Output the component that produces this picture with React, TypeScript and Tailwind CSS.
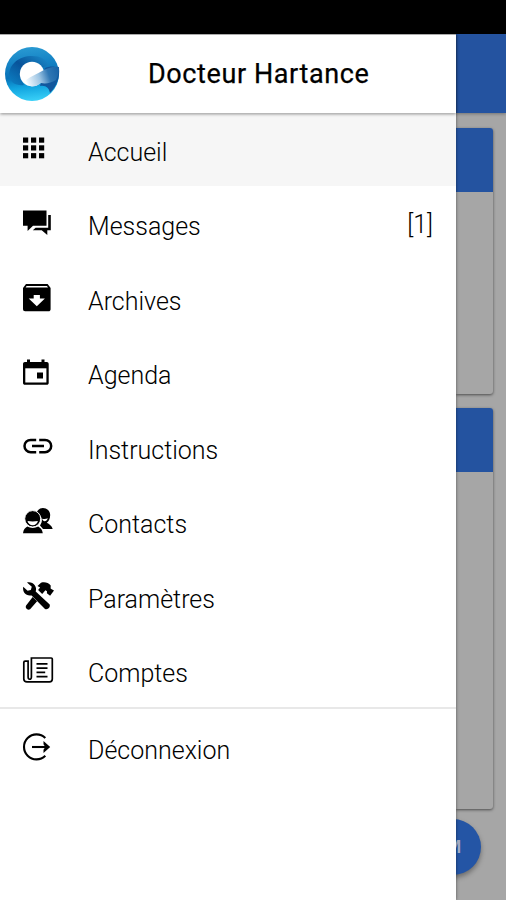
import type { ReactNode } from "react";
import { clsx } from "clsx";

type MenuItem = { label: string; icon: ReactNode; badge?: string; active?: boolean };

const AppsIcon = () => (
  <>
    {[2.5, 10.3, 18.1].map((y) =>
      [0, 8, 16].map((x) => <rect key={`${x}-${y}`} x={x} y={y} width="5.2" height="5.2" />)
    )}
  </>
);

const ChatIcon = () => (
  <>
    <path d="M0 .5h23.5v15.3H10L4.6 21v-5.2H0z" />
    <path d="M25.2 5h2.6v15.3h-3.5v4.6l-5.6-4.6H9.8l2.8-2.6h12.6z" />
  </>
);

const ArchiveIcon = () => (
  <>
    <path d="M3 0h21.6l3 4v21.2c0 1.2-.9 2.1-2.1 2.1H2.1A2.1 2.1 0 0 1 0 25.2V4z" />
    <path d="M3.6 1.9h20.4l1 1.5H2.6zM13.8 22.2l-8.1-7.7h5V11h6.2v3.5h5z" fill="#fff" />
  </>
);

const AgendaIcon = () => (
  <>
    <path d="M4 .5h3V3h11.5V.5h3V3h2.3c1.1 0 1.9.8 1.9 1.9v19c0 1.1-.8 1.9-1.9 1.9H1.9C.8 25.8 0 25 0 23.9v-19C0 3.8.8 3 1.9 3H4z" />
    <path d="M2.3 9.3h21.1v14.2H2.3z" fill="#fff" />
    <path d="M14 13.5h6v6h-6z" />
  </>
);

const LinkIcon = () => (
  <path
    d="M13.2 6.9H7.7a6.2 6.2 0 0 0 0 12.4h5.5M16.2 6.9H22a6.2 6.2 0 0 1 0 12.4h-5.8M9 13.1h12"
    fill="none"
    stroke="currentColor"
    strokeWidth="2.5"
  />
);

const ContactsIcon = () => (
  <>
    <path d="M13.5 5c.8-3 3.2-5 6.4-5C24 0 27.2 3 27.2 7c0 3.7-1.5 6.2-3.4 7.7 2.5 1.3 5 3 5.9 6.3H20l-3-3.6c3-4 3-9-3.5-12.4z" />
    <path d="M19 10.7c2.2.5 4.2.3 5.8-.4-.6 1.900-1.800 2.900-3.200 2.900-1.100 0-2-.9-2.600-2.500z" fill="#fff" />
    <ellipse cx="9.7" cy="10.8" rx="8" ry="8.2" stroke="#fff" strokeWidth="1" />
    <path d="M4.5 13.1c3.4.6 7 .6 10.4 0-.6 2.7-2.600 4.200-5.200 4.200s-4.600-1.500-5.200-4.200z" fill="#fff" />
    <path d="M4.3 18.600c1.600.9 3.400 1.400 5.400 1.400s3.900-.5 5.500-1.400c2.500 1.500 4 3.200 4.600 6.600H0c.6-3.400 1.800-5.100 4.300-6.600z" />
  </>
);

const ToolsIcon = () => (
  <>
    <path d="M4 .4 8.8 4.8 7.8 7.9 4.6 8.8.2 4.8c-.9 5.4 2.900 9.700 8.400 8.600L22 27c3 1 5.500-1.500 4.700-4.400L12.700 9.500C14.600 4.400 9.900-1 4 .4z" />
    <path d="M14.500 3.900 18 .8c3.800-1.200 7.300 0 9.700 2.700l-.1 2.900 1.100.9L31 8.600l-3.900 5.200-3.200-2.600.1-2-1.600-.9-3.200 3.700-4.100-3.900 2-2.500zM9.700 14.900l4.400 4.400-7 7.900c-2.500 1.500-5.300-1.200-4-3.700z" />
  </>
);

const PaperIcon = () => (
  <g fill="none" stroke="currentColor" strokeWidth="1.7">
    <path d="M8.5 1h19.7c.7 0 1.100.4 1.100 1.100v20c0 1.600-1.100 2.800-2.800 2.800H4c-2.100 0-3.200-1.200-3.200-3V5.400c0-.8.5-1.300 1.300-1.300h3v15.700c0 3.200 3.300 3.200 3.300.2V1z" />
    <path d="M13.500 6.800h11M13.500 11.100h11M13.500 15.400h8.700M13.500 19.600h11" strokeWidth="1.8" />
  </g>
);

const LogoutIcon = () => (
  <>
    <g fill="none" stroke="currentColor" strokeWidth="2.1">
      <path d="M22.300 5A12.500 12.500 0 1 0 22.300 22.800" />
      <path d="M9 14h14" />
    </g>
    <path d="m20.500 7.900 6.700 6.100-6.700 6.100v-3.400l1.800-2.700-1.800-2.700z" />
  </>
);

const items: MenuItem[] = [
  { label: "Accueil", icon: <AppsIcon />, active: true },
  { label: "Messages", icon: <ChatIcon />, badge: "[1]" },
  { label: "Archives", icon: <ArchiveIcon /> },
  { label: "Agenda", icon: <AgendaIcon /> },
  { label: "Instructions", icon: <LinkIcon /> },
  { label: "Contacts", icon: <ContactsIcon /> },
  { label: "Paramètres", icon: <ToolsIcon /> },
  { label: "Comptes", icon: <PaperIcon /> },
];

function MenuRow({ label, icon, badge, active }: MenuItem) {
  return (
    <li className="h-[74.5px]">
      <a className={clsx("flex h-[72px] items-center pr-[23px] pl-[23px]", active && "bg-[#f6f6f6]")}>
        <svg viewBox="0 0 32 28" className="mb-0.5 h-7 w-8 shrink-0 overflow-visible" fill="currentColor">
          {icon}
        </svg>
        <span className="mt-[5px] ml-[33px] flex-1 text-[25px] leading-8 font-light">{label}</span>
        {badge && <span className="text-[25px] leading-8 font-light">{badge}</span>}
      </a>
    </li>
  );
}

function Logo() {
  return (
    <svg viewBox="0 0 56 56" className="size-14 shrink-0">
      <defs>
        <linearGradient id="ring" x1=".3" y1="0" x2=".4" y2="1">
          <stop offset="0" stopColor="#2a9bd3" />
          <stop offset=".3" stopColor="#1583c5" />
          <stop offset=".55" stopColor="#0872b8" />
          <stop offset=".75" stopColor="#12a5e0" />
          <stop offset="1" stopColor="#38cff7" />
        </linearGradient>
        <linearGradient id="crescent" x1="0" y1="1" x2="1" y2="0">
          <stop offset="0" stopColor="#0c83c6" />
          <stop offset=".5" stopColor="#08539a" />
          <stop offset="1" stopColor="#1c8fce" />
        </linearGradient>
        <linearGradient id="tail" x1="0" y1=".6" x2="1" y2=".4">
          <stop offset="0" stopColor="#f0f8fd" />
          <stop offset=".4" stopColor="#9cc4e3" />
          <stop offset=".7" stopColor="#2f77b4" />
          <stop offset="1" stopColor="#1a65a8" />
        </linearGradient>
      </defs>
      <circle cx="28" cy="28" r="27" fill="url(#ring)" />
      <path d="M5 30C5 18 15 10 28 10c8 0 14 3 17 9l-8 3c-8-7-19-4-20 5 0 6 1 9 3 12-7 1-14-2-15-9z" fill="url(#crescent)" />
      <path d="M41 22c5-2 9-2 14 0 1 9-2 18-9 25-1-5-4-8-10-7z" fill="#11579d" />
      <circle cx="28" cy="28" r="12.200" fill="#fff" />
      <path d="M22 34c5-4 13-7 18-10 5-2.500 10-4 15-3 0 5-1 9-3 13-5 3-10 4-15 3-3 2.500-6 3.400-9 3.400-2.500 0-5-2-6-6.400z" fill="url(#tail)" />
    </svg>
  );
}

function Drawer() {
  return (
    <aside className="relative z-10 flex w-[456px] shrink-0 flex-col bg-white shadow-[0_0_3px_rgba(0,0,0,0.5)]">
      <header className="relative flex h-[79px] shrink-0 items-center border-t border-[#aaa] pl-1 shadow-[0_1px_3px_rgba(0,0,0,0.45)]">
        <Logo />
        <h1 className="ml-[88px] text-[27px] leading-8 font-normal tracking-[0.6px] [-webkit-text-stroke:0.25px_black]">
          Docteur Hartance
        </h1>
      </header>
      <ul className="mt-px">
        {items.map((item) => (
          <MenuRow key={item.label} {...item} />
        ))}
      </ul>
      <ul className="-mt-[3px] border-t-2 border-[#e8e8e8] pt-[3px]">
        <MenuRow label="Déconnexion" icon={<LogoutIcon />} />
      </ul>
    </aside>
  );
}

function HomeBehind() {
  return (
    <main className="relative flex flex-1 flex-col bg-[#a6a6a6]">
      <div className="h-[79px] shrink-0 bg-[#2453a0] shadow-[0_1px_3px_rgba(0,0,0,0.3)]" />
      <section className="mt-[15px] mr-[13px] h-[266px] rounded-r-[3px] shadow-[0_1px_3px_rgba(0,0,0,0.55)]">
        <div className="h-[64px] rounded-tr-[3px] bg-[#2453a0]" />
      </section>
      <section className="mt-[14px] mr-[13px] h-[401px] rounded-r-[3px] shadow-[0_1px_3px_rgba(0,0,0,0.55)]">
        <div className="h-[64px] rounded-tr-[3px] bg-[#2453a0]" />
      </section>
      <button className="absolute right-[25px] bottom-[25px] flex size-14 items-center justify-center rounded-full bg-[#2455a5] text-[19px] font-medium text-[#a6b0c8] shadow-[0_3px_5px_rgba(0,0,0,0.35)]">
        M
      </button>
    </main>
  );
}

export default function App() {
  return (
    <div className="flex h-[900px] w-[506px] flex-col overflow-hidden bg-white font-['Roboto',sans-serif] text-black">
      <div className="h-[34px] shrink-0 bg-black" />
      <div className="flex flex-1">
        <Drawer />
        <HomeBehind />
      </div>
    </div>
  );
}
